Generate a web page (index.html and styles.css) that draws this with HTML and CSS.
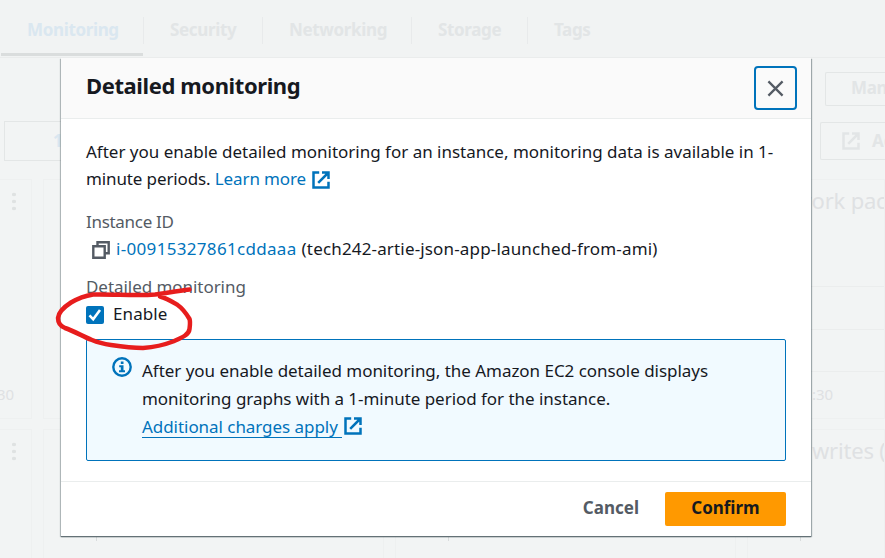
FILE: index.html
```html
<!DOCTYPE html>
<html lang="en">
<head>
<meta charset="utf-8">
<title>Detailed monitoring</title>
<link rel="stylesheet" href="styles.css">
</head>
<body>
<svg class="defs" aria-hidden="true">
  <symbol id="external" viewBox="0 0 18 18">
    <path d="M7.2 1.5H1.5v15h15v-5.7M10 1.5h6.5V8M16 2 6.2 11.8" fill="none" stroke="currentColor" stroke-width="2.5"/>
  </symbol>
</svg>
<div class="page" aria-hidden="true">
  <nav class="tabs">
    <span class="tab active t1">Monitoring</span>
    <span class="tab t2">Security</span>
    <span class="tab t3">Networking</span>
    <span class="tab t4">Storage</span>
    <span class="tab t5">Tags</span>
  </nav>
  <div class="toolbar">
    <span class="range">1h</span>
    <div class="actions">
      <span class="ghost manage">Manage</span>
      <span class="ghost add"><svg class="ext"><use href="#external"/></svg>Add</span>
    </div>
  </div>
  <div class="cards">
    <section class="card"><i class="dots"></i><span class="tick">:30</span></section>
    <section class="card"><i class="mark"></i></section>
    <section class="card"><i class="mark"></i></section>
    <section class="card last"><h3 class="h-net">Network packets</h3><i class="rule r1"></i><i class="rule r2"></i><i class="rule r3"></i><span class="tick right">:30</span></section>
    <section class="card"><i class="dots"></i></section>
    <section class="card"><i class="mark"></i></section>
    <section class="card"><i class="mark"></i></section>
    <section class="card last"><h3 class="h-disk">writes (</h3><i class="mark"></i></section>
  </div>
</div>

<div class="modal" role="dialog" aria-label="Detailed monitoring">
  <header class="head">
    <h2>Detailed monitoring</h2>
    <button class="close" aria-label="Close"><svg viewBox="0 0 18 18"><path d="M1.5 1.5l15 15M16.500 1.500l-15 15"/></svg></button>
  </header>
  <div class="body">
    <p class="intro"><span class="l1">After you enable detailed monitoring for an instance, monitoring data is available in 1-</span><br><span class="l2">minute periods. <a>Learn more</a></span><svg class="ext link-ext"><use href="#external"/></svg></p>
    <div class="label id-label">Instance ID</div>
    <div class="id-row">
      <svg class="copy" viewBox="0 0 18 18"><path d="M5.500 5V1.300h11.200v11H13M1.300 5.300h11.400v11.400H1.300z"/></svg>
      <a class="iid">i-00915327861cddaaa</a><span class="iname">(tech242-artie-json-app-launched-from-ami)</span>
    </div>
    <div class="label dm-label">Detailed monitoring</div>
    <div class="check-row">
      <svg class="check" viewBox="0 0 18 18"><rect width="18" height="18" rx="2"/><path d="M3.500 9.300l3.700 4 6.800-9.300"/></svg>
      <span class="enable">Enable</span>
    </div>
    <div class="alert">
      <svg class="info" viewBox="0 0 20 20"><circle cx="10" cy="10" r="8.700"/><path d="M8.800 4.500h2.700v2.500H8.800zM7.200 8.300h4.300v5H13v2H7v-2h1.800v-3H7.200z"/></svg>
      <div class="alert-text">
        <div class="a1">After you enable detailed monitoring, the Amazon EC2 console displays</div>
        <div class="a2">monitoring graphs with a 1-minute period for the instance.</div>
        <div class="a3"><a class="charges">Additional charges apply </a><svg class="ext"><use href="#external"/></svg></div>
      </div>
    </div>
  </div>
  <footer class="foot">
    <button class="cancel">Cancel</button>
    <button class="confirm">Confirm</button>
  </footer>
</div>

<svg class="annotation" viewBox="0 0 140 64" aria-hidden="true">
  <path d="M135.500 4.500C122 6 110 8.500 101 9.500C82 11 60 9 39 9.500C30 11 23 14 17 17.500C10 22 4.500 28 4 33C4 38 6 41 11 43C20 46 28 51 38 55C45 58 50 59 57 60C70 62 78 63 89 63C102 62 110 60 119 56.500C127 53 135 50 135.500 44C136 40 136.500 37 135.500 34C132 28 128 23 123 19.500C117 16 112 13 106 11.500"/>
</svg>
</body>
</html>
```
FILE: styles.css
```css
* { box-sizing: border-box; }
body {
  margin: 0;
  width: 885px;
  height: 558px;
  overflow: hidden;
  position: relative;
  background: #f2f4f4;
  font: 17px/27.5px "Noto Sans", "Open Sans", sans-serif;
  color: #16191f;
}
h2, h3, p { margin: 0; }
button { font: inherit; padding: 0; border: 0; background: none; }
a { color: #0073bb; }
svg { display: block; flex: none; overflow: visible; }
.defs { position: absolute; width: 0; height: 0; }
.ext { width: 18px; height: 18px; }

/* dimmed page behind the dialog */
.page { height: 558px; overflow: hidden; color: #e2e5e6; }
.tabs {
  display: flex;
  height: 58px;
  padding-left: 1px;
  background: #f1f3f3;
  border-bottom: 1px solid #eaecec;
}
.tab {
  position: relative;
  height: 55px;
  padding-top: 16px;
  padding-left: 27px;
  line-height: 27px;
  font-weight: 700;
  white-space: nowrap;
  letter-spacing: -0.35px;
}
.tab:not(:last-child)::after {
  content: "";
  position: absolute;
  right: -1px;
  top: 17px;
  width: 1px;
  height: 27px;
  background: #e8eaeb;
}
.active { height: 56px; color: #dae7f0; border-bottom: 3px solid #dadddd; }
.t1 { width: 142px; padding-left: 26px; }
.t2 { width: 119px; }
.t3 { width: 149px; }
.t4 { width: 116px; }
.toolbar {
  display: flex;
  justify-content: space-between;
  height: 121px;
  padding: 14px 0 0 4px;
}
.range {
  width: 120px;
  height: 40px;
  margin-top: 49px;
  padding: 5px 0 0 48px;
  border: 1px solid #e3e6e6;
  color: #dae7f0;
  font-weight: 700;
}
.actions { width: 65px; }
.ghost {
  display: flex;
  align-items: center;
  border: 1px solid #e3e6e6;
  border-right: 0;
  border-radius: 2px 0 0 2px;
  font-weight: 700;
  overflow: hidden;
}
.manage { height: 34px; margin: 0 0 16px 5px; padding: 0 0 2px 25px; letter-spacing: -0.3px; }
.add { height: 38px; padding-left: 21px; gap: 12px; }
.cards {
  display: grid;
  grid-template-columns: 32px 341px 341px 138px;
  grid-template-rows: 240px 240px;
  column-gap: 11px;
  row-gap: 10px;
}
.card {
  position: relative;
  border: 1px solid #eef0f0;
  background: #f2f4f4;
}
.card:nth-child(4n+1) { border-left: 0; }
.dots {
  display: block;
  width: 4px;
  height: 21px;
  margin: 11px 0 0 12px;
  background: radial-gradient(circle, #dfe2e2 1.7px, transparent 2.1px) 0 0 / 4px 7px;
}
.tick { display: block; margin: 169px 0 0 -7px; font-size: 15px; line-height: 27px; color: #dfe1e3; }
.card h3 {
  padding: 6px 0 0 57px;
  font-size: 22px;
  line-height: 28px;
  font-weight: 400;
  color: #dfe1e3;
  white-space: nowrap;
  overflow: hidden;
  letter-spacing: -0.2px;
}
.h-net { text-indent: -47px; }
.h-disk { text-indent: 7px; }
.rule { display: block; height: 1px; background: #ebeded; }
.r1 { margin-top: 72px; }
.r2 { margin-top: 42px; }
.r3 { margin-top: 41px; }
.right { margin: 9px 0 0 64px; }
.mark { position: absolute; top: 105px; left: 52px; width: 1px; height: 6px; background: #d9dcdd; }

/* dialog */
.modal {
  position: absolute;
  left: 61px;
  top: 58px;
  width: 750px;
  height: 478px;
  display: flex;
  flex-direction: column;
  background: #fff;
  box-shadow: 0 1px 1px #647176, 1px 1px 1px rgba(0, 28, 36, .3), -1px 1px 1px rgba(0, 28, 36, .22);
}
.head {
  display: flex;
  justify-content: space-between;
  height: 61px;
  padding: 8px 14px 0 25px;
  background: #fafafa;
  border-bottom: 1px solid #eaeded;
}
h2 { font-size: 22px; line-height: 38px; font-weight: 700; letter-spacing: -0.4px; }
.close {
  display: grid;
  place-items: center;
  width: 43px;
  height: 44px;
  border: 2px solid #0073bb;
  border-radius: 4px;
}
.close svg { width: 17px; height: 17px; fill: none; stroke: #545b64; stroke-width: 2.4; }
.body { height: 362px; padding: 19px 25px 0; white-space: nowrap; }
.intro { height: 55px; line-height: 27px; }
.l1 { letter-spacing: -0.01px; }
.l2 { letter-spacing: -0.12px; }
.link-ext { display: inline-block; margin-left: 6px; vertical-align: -4px; color: #0073bb; }
.label { color: #545b64; height: 27px; }
.id-label { margin-top: 15px; letter-spacing: -0.3px; }
.id-row { display: flex; align-items: center; height: 27px; padding-left: 6px; }
.copy { width: 18px; height: 18px; margin: 2px 6px 0 0; fill: none; stroke: #545b64; stroke-width: 2.4; }
.iid { letter-spacing: 0.32px; }
.iname { margin-left: 5px; letter-spacing: 0.16px; }
.dm-label { margin-top: 11px; letter-spacing: -0.05px; }
.check-row { display: flex; align-items: center; height: 27px; }
.check { width: 18px; height: 18px; margin: 2px 9px 0 0; fill: #0073bb; }
.check path { fill: none; stroke: #fff; stroke-width: 2.6; }
.enable { letter-spacing: 0.1px; }
.alert {
  display: flex;
  height: 122px;
  margin-top: 12px;
  padding: 17px 25px;
  border: 1px solid #0073bb;
  border-radius: 2px;
  background: #f1faff;
}
.info { width: 20px; height: 20px; margin-right: 10px; fill: none; stroke: #0073bb; stroke-width: 2.4; }
.info path { fill: #0073bb; stroke: none; }
.a1, .a2 { letter-spacing: -0.035px; }
.a3 { display: flex; align-items: center; margin-top: 1px; color: #0073bb; }
.a3 .ext { margin-top: 1px; }
.charges { height: 24px; margin-top: 1px; line-height: 25px; width: 200px; margin-right: 2px; letter-spacing: -0.05px; border-bottom: 1px solid #0073bb; }
.foot {
  display: flex;
  justify-content: flex-end;
  gap: 26px;
  height: 55px;
  padding: 10px 25px 0;
  border-top: 1px solid #eaeded;
  font-weight: 700;
}
.cancel, .confirm { height: 34px; font-weight: 700; padding-bottom: 2px; }
.cancel { color: #545b64; }
.confirm { width: 121px; border-radius: 2px; background: #ff9900; color: #16191f; }

.annotation {
  position: absolute;
  left: 54px;
  top: 285px;
  width: 140px;
  height: 64px;
  fill: none;
  stroke: #e71d1d;
  stroke-width: 4.500;
  stroke-linecap: round;
  stroke-linejoin: round;
}
```
